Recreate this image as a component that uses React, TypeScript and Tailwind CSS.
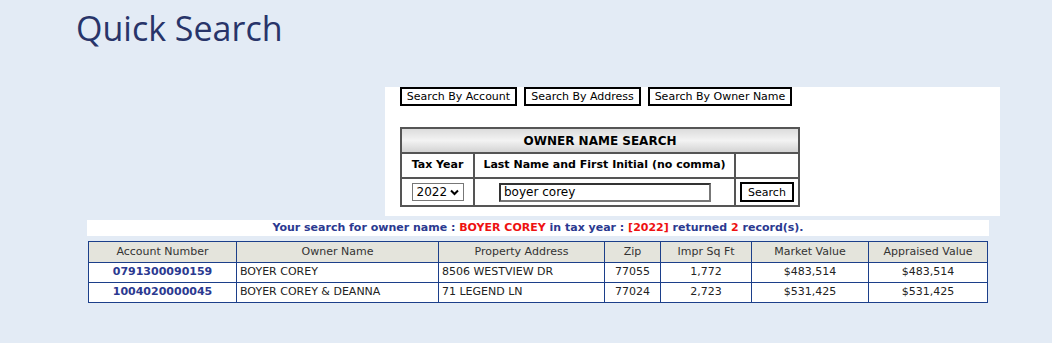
const font = { fontFamily: '"DejaVu Sans", Verdana, sans-serif' };

const rows = [
  { acct: "0791300090159", owner: "BOYER COREY", addr: "8506 WESTVIEW DR", zip: "77055", sqft: "1,772", market: "$483,514", appraised: "$483,514" },
  { acct: "1004020000045", owner: "BOYER COREY & DEANNA", addr: "71 LEGEND LN", zip: "77024", sqft: "2,723", market: "$531,425", appraised: "$531,425" },
];

const TabButton = ({ label, w }: { label: string; w: string }) => (
  <button className={`h-[19px] ${w} border-2 border-black bg-white text-[11px] leading-none text-black`}>
    {label}
  </button>
);

export default function App() {
  return (
    <div className="w-full h-[343px] bg-[#e3ebf5] overflow-hidden" style={font}>
      <h1
        className="pl-[76px] pt-[4px] h-[87px] text-[34px] leading-[48px] text-[#283469]"
        style={{ fontFamily: '"Open Sans", sans-serif' }}
      >
        Quick Search
      </h1>

      <div className="ml-[385px] w-[615px] h-[129px] bg-white pl-[15px]">
        <div className="flex gap-[7px]">
          <TabButton label="Search By Account" w="w-[117px]" />
          <TabButton label="Search By Address" w="w-[117px]" />
          <TabButton label="Search By Owner Name" w="w-[144px]" />
        </div>

        <table className="mt-[21px] w-[400px] table-fixed border-collapse border-2 border-[#555] text-[12px] text-black">
          <colgroup>
            <col className="w-[73px]" />
            <col className="w-[261px]" />
            <col />
          </colgroup>
          <tbody>
            <tr className="h-[25px]">
              <th
                colSpan={3}
                className="border border-[#666] font-bold bg-gradient-to-b from-[#dcdcdc] via-[#f3f3f3] to-[#d4d4d4]"
              >
                OWNER NAME SEARCH
              </th>
            </tr>
            <tr className="h-[25px] text-[11px] whitespace-nowrap">
              <th className="border-2 border-[#555] font-bold">Tax Year</th>
              <th className="border-2 border-[#555] font-bold">Last Name and First Initial (no comma)</th>
              <th className="border-2 border-[#555]"></th>
            </tr>
            <tr className="h-[28px]">
              <td className="border-2 border-[#555] text-center">
                <span className="inline-flex items-center justify-between w-[52px] h-[18px] border border-[#777] px-[4px] text-[12px]">
                  2022
                  <svg width="9" height="7" viewBox="0 0 9 7">
                    <path d="M1 1.5 L4.5 5 L8 1.5" stroke="#000" strokeWidth="2" fill="none" />
                  </svg>
                </span>
              </td>
              <td className="border-2 border-[#555] pl-[24px]">
                <div className="w-[212px] h-[19px] border-2 border-t-[#333] border-l-[#333] border-r-[#777] border-b-[#777] text-[12px] leading-[15px] px-[3px]">
                  boyer corey
                </div>
              </td>
              <td className="border-2 border-[#555] text-center">
                <button className="w-[54px] h-[20px] border-2 border-black bg-white text-[11px] leading-none">
                  Search
                </button>
              </td>
            </tr>
          </tbody>
        </table>
      </div>

      <div className="ml-[87px] mt-[4px] w-[902px] h-[16px] bg-white text-center text-[11px] font-bold leading-[16px] text-[#2b3990] whitespace-nowrap">
        Your search for owner name : <span className="text-[#ee1111]">BOYER COREY</span> in tax year :{" "}
        <span className="text-[#ee1111]">[2022]</span> returned <span className="text-[#ee1111]">2</span> record(s).
      </div>

      <table className="ml-[88px] mt-[5px] w-[900px] table-fixed border-collapse border border-[#1c3f8a] text-[11px] whitespace-nowrap">
        <thead>
          <tr className="h-[21px] bg-[#e4e4dc] text-[#333]">
            <th className="w-[148px] border border-[#1c3f8a] font-normal">Account Number</th>
            <th className="w-[202px] border border-[#1c3f8a] font-normal">Owner Name</th>
            <th className="w-[166px] border border-[#1c3f8a] font-normal">Property Address</th>
            <th className="w-[56px] border border-[#1c3f8a] font-normal">Zip</th>
            <th className="w-[91px] border border-[#1c3f8a] font-normal">Impr Sq Ft</th>
            <th className="w-[117px] border border-[#1c3f8a] font-normal">Market Value</th>
            <th className="border border-[#1c3f8a] font-normal">Appraised Value</th>
          </tr>
        </thead>
        <tbody className="bg-white text-[#222]">
          {rows.map((r) => (
            <tr key={r.acct} className="h-[20px]">
              <td className="border border-[#1c3f8a] text-center font-bold text-[#2b3990]">{r.acct}</td>
              <td className="border border-[#1c3f8a] pl-[3px]">{r.owner}</td>
              <td className="border border-[#1c3f8a] pl-[3px]">{r.addr}</td>
              <td className="border border-[#1c3f8a] text-center">{r.zip}</td>
              <td className="border border-[#1c3f8a] text-center">{r.sqft}</td>
              <td className="border border-[#1c3f8a] text-center">{r.market}</td>
              <td className="border border-[#1c3f8a] text-center">{r.appraised}</td>
            </tr>
          ))}
        </tbody>
      </table>
    </div>
  );
}
